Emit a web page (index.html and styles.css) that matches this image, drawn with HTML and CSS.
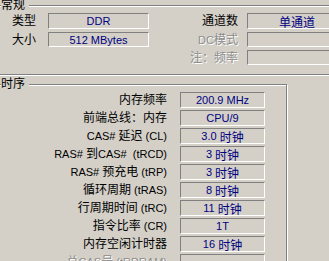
FILE: index.html
```html
<!DOCTYPE html>
<html lang="zh">
<head>
    <meta charset="UTF-8">
    <title>内存</title>
    <link rel="stylesheet" href="styles.css">
</head>
<body>
    <div class="group general">
        <span class="legend">常规</span>
        <div class="fields left">
            <span class="label">类型</span><span class="value">DDR</span>
            <span class="label">大小</span><span class="value">512 MBytes</span>
        </div>
        <div class="fields right">
            <span class="label">通道数</span><span class="value"><span class="zh">单通道</span></span>
            <span class="label off"><span class="en">DC</span>模式</span><span class="value"></span>
            <span class="label off">注：频率</span><span class="value"></span>
        </div>
    </div>

    <div class="group timing">
        <span class="legend">时序</span>
        <div class="timings">
            <span class="label">内存频率</span><span class="value">200.9 MHz</span>
            <span class="label">前端总线：内存</span><span class="value">CPU/9</span>
            <span class="label"><span class="en">CAS# </span>延迟<span class="en"> (CL)</span></span><span class="value">3.0 <span class="zh">时钟</span></span>
            <span class="label"><span class="en">RAS# </span>到<span class="en">CAS#&nbsp; (tRCD)</span></span><span class="value">3 <span class="zh">时钟</span></span>
            <span class="label"><span class="en">RAS# </span>预充电<span class="en"> (tRP)</span></span><span class="value">3 <span class="zh">时钟</span></span>
            <span class="label">循环周期<span class="en"> (tRAS)</span></span><span class="value">8 <span class="zh">时钟</span></span>
            <span class="label">行周期时间<span class="en"> (tRC)</span></span><span class="value">11 <span class="zh">时钟</span></span>
            <span class="label">指令比率<span class="en"> (CR)</span></span><span class="value">1T</span>
            <span class="label">内存空闲计时器</span><span class="value">16 <span class="zh">时钟</span></span>
            <span class="label off">总<span class="en">CAS</span>号<span class="en"> (tRDRAM)</span></span><span class="value"></span>
        </div>
    </div>
</body>
</html>
```

FILE: styles.css
```css
* { margin: 0; padding: 0; box-sizing: border-box; }
html, body {
    width: 329px;
    height: 261px;
    overflow: hidden;
}
body {
    background: #d4d0c8;
    color: #000;
    font-family: "Liberation Sans", "Noto Sans CJK SC", sans-serif;
    font-size: 12px;
}
.group {
    position: relative;
    margin-left: -10px;
    border: 1px solid #808080;
    box-shadow: 1px 1px 0 #fff, inset 1px 1px 0 #fff;
}
.legend {
    position: absolute;
    left: 10px;
    top: -7px;
    line-height: 12px;
    padding-right: 4px;
    background: #d4d0c8;
}
.general {
    margin-top: 5px;
    width: 360px;
    height: 70px;
    display: flex;
    padding: 7px 0 0 21px;
}
.fields {
    display: grid;
    grid-template-rows: 16px 15px 15px;
    row-gap: 3px;
    align-items: center;
}
.left {
    grid-template-columns: 36px 101px;
}
.right {
    margin-left: 29px;
    grid-template-columns: 60px 100px;
    column-gap: 9px;
}
.right .label {
    text-align: right;
}
.label {
    line-height: 14px;
    white-space: nowrap;
}
.label.off {
    color: #8c8c8c;
    text-shadow: 1px 1px 0 #fff;
}
.en {
    font-size: 11px;
}
.value {
    height: 100%;
    border-top: 1px solid #808080;
    border-left: 1px solid #808080;
    border-bottom: 1px solid #fff;
    border-right: 1px solid #fff;
    color: #000080;
    font-size: 11px;
    text-align: center;
    display: flex;
    align-items: center;
    justify-content: center;
    white-space: pre;
}
.zh {
    font-size: 12px;
}
.timing {
    margin-top: 9px;
    width: 297px;
    height: 200px;
    padding-top: 7px;
}
.timings {
    display: grid;
    grid-template-columns: 176px 85px;
    grid-auto-rows: 16px;
    column-gap: 13px;
    row-gap: 2px;
    align-items: center;
}
.timings .label {
    text-align: right;
}
```
